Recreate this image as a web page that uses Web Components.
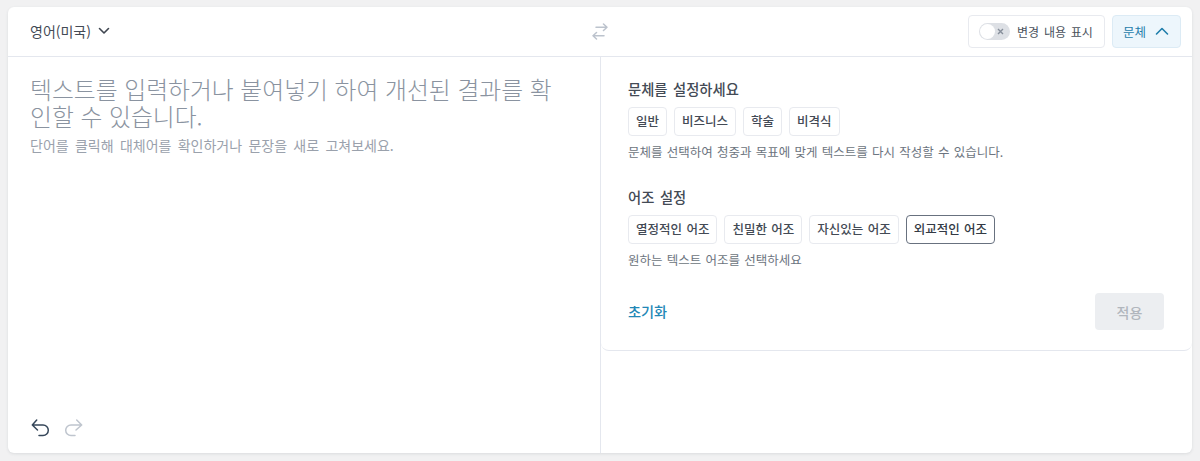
<!DOCTYPE html>
<html lang="ko">
<head>
<meta charset="utf-8">
<title>문체</title>
<style>
html, body {
  margin: 0;
  height: 461px;
  overflow: hidden;
  background: #f1f1f2;
  font-family: "Noto Sans CJK KR", sans-serif;
}
</style>
</head>
<body>
<editor-card></editor-card>
<script>
const SANS = `"Noto Sans CJK KR", "Noto Sans", sans-serif`;

class ChipButton extends HTMLElement {
  constructor() {
    super();
    const shadowRoot = this.attachShadow({ mode: 'open' });
    shadowRoot.innerHTML = `
<style>
:host {
  display: inline-flex;
  align-items: center;
  box-sizing: border-box;
  height: 29px;
  padding: 0 7px;
  border: 1px solid #e8eaef;
  border-radius: 4px;
  background: #fff;
  color: #434a55;
  font: 500 12.5px/1 ${SANS};
  word-spacing: .07em;
  white-space: nowrap;
}
:host([selected]) {
  border-color: #68717f;
  color: #333a44;
}
</style>
<slot></slot>
`;
  }
}

class ToggleSwitch extends HTMLElement {
  constructor() {
    super();
    const shadowRoot = this.attachShadow({ mode: 'open' });
    shadowRoot.innerHTML = `
<style>
:host {
  display: inline-flex;
  align-items: center;
  justify-content: space-between;
  box-sizing: border-box;
  width: 31px;
  height: 17px;
  padding: 0 6px 0 1px;
  border-radius: 9px;
  background: #dde0e5;
}
.knob {
  width: 15px;
  height: 15px;
  border-radius: 50%;
  background: #fff;
}
svg { display: block; }
</style>
<span class="knob"></span>
<svg width="7" height="7" viewBox="0 0 7 7" fill="none" stroke="#868e9a" stroke-width="1.4"><path d="M1 1l5 5M6 1l-5 5"/></svg>
`;
  }
}

class TopBar extends HTMLElement {
  constructor() {
    super();
    const shadowRoot = this.attachShadow({ mode: 'open' });
    shadowRoot.innerHTML = `
<style>
:host {
  display: grid;
  grid-template-columns: 562px 16px 1fr;
  align-items: center;
  height: 49px;
  padding: 0 11px 0 22px;
  border-bottom: 1px solid #e4e7ee;
  font-family: ${SANS};
}
.lang {
  display: flex;
  align-items: center;
  gap: 7px;
  padding-bottom: 2px;
  color: #434a55;
  font-size: 14px;
}
.right {
  display: flex;
  justify-content: flex-end;
  gap: 7px;
}
.track-btn, .style-btn {
  display: flex;
  align-items: center;
  box-sizing: border-box;
  height: 33px;
  border-radius: 4px;
  font-size: 12.5px;
}
.track-btn {
  gap: 7px;
  width: 137px;
  padding-left: 10px;
  border: 1px solid #e8eaef;
  color: #49515c;
  word-spacing: .12em;
  font-size: 12px;
}
.style-btn {
  gap: 9px;
  width: 69px;
  padding-left: 10px;
  border: 1px solid #dcebf5;
  background: #edf6fc;
  color: #1f7dab;
}
svg { display: block; }
</style>
<div class="lang">
  <span>영어(미국)</span>
  <svg width="12" height="8" viewBox="0 0 12 8" fill="none" stroke="#3f4650" stroke-width="1.6" stroke-linecap="round" stroke-linejoin="round"><path d="M1.5 1.5L6 6l4.5-4.5"/></svg>
</div>
<svg class="swap" width="16" height="18" viewBox="0 0 16 18" fill="none" stroke="#bcc3cd" stroke-width="1.5" stroke-linecap="round" stroke-linejoin="round"><path d="M4 4.2h11M11.5 1L15 4.2l-3.5 3.3M12 12.8H1M4.5 9.5L1 12.8l3.5 3.2"/></svg>
<div class="right">
  <div class="track-btn"><toggle-switch></toggle-switch><span>변경 내용 표시</span></div>
  <div class="style-btn"><span>문체</span>
    <svg width="14" height="9" viewBox="0 0 14 9" fill="none" stroke="#1f7dab" stroke-width="1.6" stroke-linecap="round" stroke-linejoin="round"><path d="M1.5 7L7 1.5 12.5 7"/></svg>
  </div>
</div>
`;
  }
}

class TextPane extends HTMLElement {
  constructor() {
    super();
    const shadowRoot = this.attachShadow({ mode: 'open' });
    shadowRoot.innerHTML = `
<style>
:host {
  display: flex;
  flex-direction: column;
  box-sizing: border-box;
  padding: 18px 22px 15px;
  border-right: 1px solid #e4e7ee;
  font-family: ${SANS};
}
.placeholder {
  margin: 0;
  max-width: 530px;
  color: #8a93a0;
  font-size: 23.8px;
  line-height: 27px;
  font-weight: 300;
  word-break: break-all;
}
.hint {
  margin: 7px 0 0;
  color: #9aa1ac;
  font-size: 14px;
  line-height: 19px;
  font-weight: 400;
  word-spacing: .17em;
}
.history {
  display: flex;
  gap: 14px;
  margin-top: auto;
}
svg { display: block; }
</style>
<p class="placeholder">텍스트를 입력하거나 붙여넣기 하여 개선된 결과를 확인할 수 있습니다.</p>
<p class="hint">단어를 클릭해 대체어를 확인하거나 문장을 새로 고쳐보세요.</p>
<div class="history">
  <svg width="20" height="20" viewBox="0 0 20 20" fill="none" stroke="#36475a" stroke-width="1.5" stroke-linecap="round" stroke-linejoin="round"><path d="M6.7 2L2.3 7l5.2 5M2.3 7H13a5.3 5.3 0 0 1 0 10.6H9"/></svg>
  <svg width="20" height="20" viewBox="0 0 20 20" fill="none" stroke="#bfc5ce" stroke-width="1.5" stroke-linecap="round" stroke-linejoin="round"><path d="M12.7 2l5 5-5.7 5M17.7 7H7a5.3 5.3 0 0 0 0 10.6h4"/></svg>
</div>
`;
  }
}

class StyleGroup extends HTMLElement {
  constructor() {
    super();
    const shadowRoot = this.attachShadow({ mode: 'open' });
    shadowRoot.innerHTML = `
<style>
:host {
  display: block;
  font-family: ${SANS};
}
h3 {
  margin: 0 0 9px;
  color: #434a55;
  font-size: 14.3px;
  line-height: 19px;
  font-weight: 500;
  word-spacing: .11em;
}
.chips {
  display: flex;
  gap: 7px;
}
p {
  margin: 7px 0 0;
  color: #6c7480;
  font-size: 12.5px;
  line-height: 18px;
  word-spacing: .06em;
}
</style>
<h3></h3>
<div class="chips"><slot></slot></div>
<p></p>
`;
    shadowRoot.querySelector('h3').textContent = this.getAttribute('title');
    shadowRoot.querySelector('p').textContent = this.getAttribute('hint');
  }
}

class SettingsPanel extends HTMLElement {
  constructor() {
    super();
    const shadowRoot = this.attachShadow({ mode: 'open' });
    shadowRoot.innerHTML = `
<style>
:host {
  display: flex;
  flex-direction: column;
  box-sizing: border-box;
  height: 294px;
  padding: 22px 28px 20px 27px;
  border-bottom: 1px solid #e4e7ee;
  border-bottom-left-radius: 8px;
  border-bottom-right-radius: 8px;
  font-family: ${SANS};
}
::slotted(:first-child) {
  margin-bottom: 26px;
}
.actions {
  display: flex;
  align-items: center;
  justify-content: space-between;
  margin-top: auto;
}
.reset {
  padding-bottom: 2px;
  color: #2287b6;
  font-size: 14.2px;
  font-weight: 500;
}
.apply {
  display: flex;
  align-items: center;
  justify-content: center;
  width: 69px;
  height: 37px;
  border-radius: 4px;
  background: #eceef1;
  color: #b1b6bd;
  font-size: 14px;
  font-weight: 500;
}
</style>
<slot></slot>
<div class="actions"><span class="reset">초기화</span><span class="apply">적용</span></div>
`;
  }
}

class EditorCard extends HTMLElement {
  constructor() {
    super();
    const shadowRoot = this.attachShadow({ mode: 'open' });
    shadowRoot.innerHTML = `
<style>
:host {
  display: flex;
  flex-direction: column;
  box-sizing: border-box;
  width: 1184px;
  height: 446px;
  margin: 7px 8px;
  border-radius: 6px;
  background: #fff;
  box-shadow: 0 1px 3px rgba(60, 70, 85, .12);
}
.body {
  flex: 1;
  display: grid;
  grid-template-columns: 593px 1fr;
}
</style>
<top-bar></top-bar>
<div class="body">
  <text-pane></text-pane>
  <div>
    <settings-panel>
      <style-group title="문체를 설정하세요" hint="문체를 선택하여 청중과 목표에 맞게 텍스트를 다시 작성할 수 있습니다.">
        <chip-button>일반</chip-button>
        <chip-button>비즈니스</chip-button>
        <chip-button>학술</chip-button>
        <chip-button>비격식</chip-button>
      </style-group>
      <style-group title="어조 설정" hint="원하는 텍스트 어조를 선택하세요">
        <chip-button>열정적인 어조</chip-button>
        <chip-button>친밀한 어조</chip-button>
        <chip-button>자신있는 어조</chip-button>
        <chip-button selected>외교적인 어조</chip-button>
      </style-group>
    </settings-panel>
  </div>
</div>
`;
  }
}

customElements.define('chip-button', ChipButton);
customElements.define('toggle-switch', ToggleSwitch);
customElements.define('top-bar', TopBar);
customElements.define('text-pane', TextPane);
customElements.define('style-group', StyleGroup);
customElements.define('settings-panel', SettingsPanel);
customElements.define('editor-card', EditorCard);
</script>
</body>
</html>
